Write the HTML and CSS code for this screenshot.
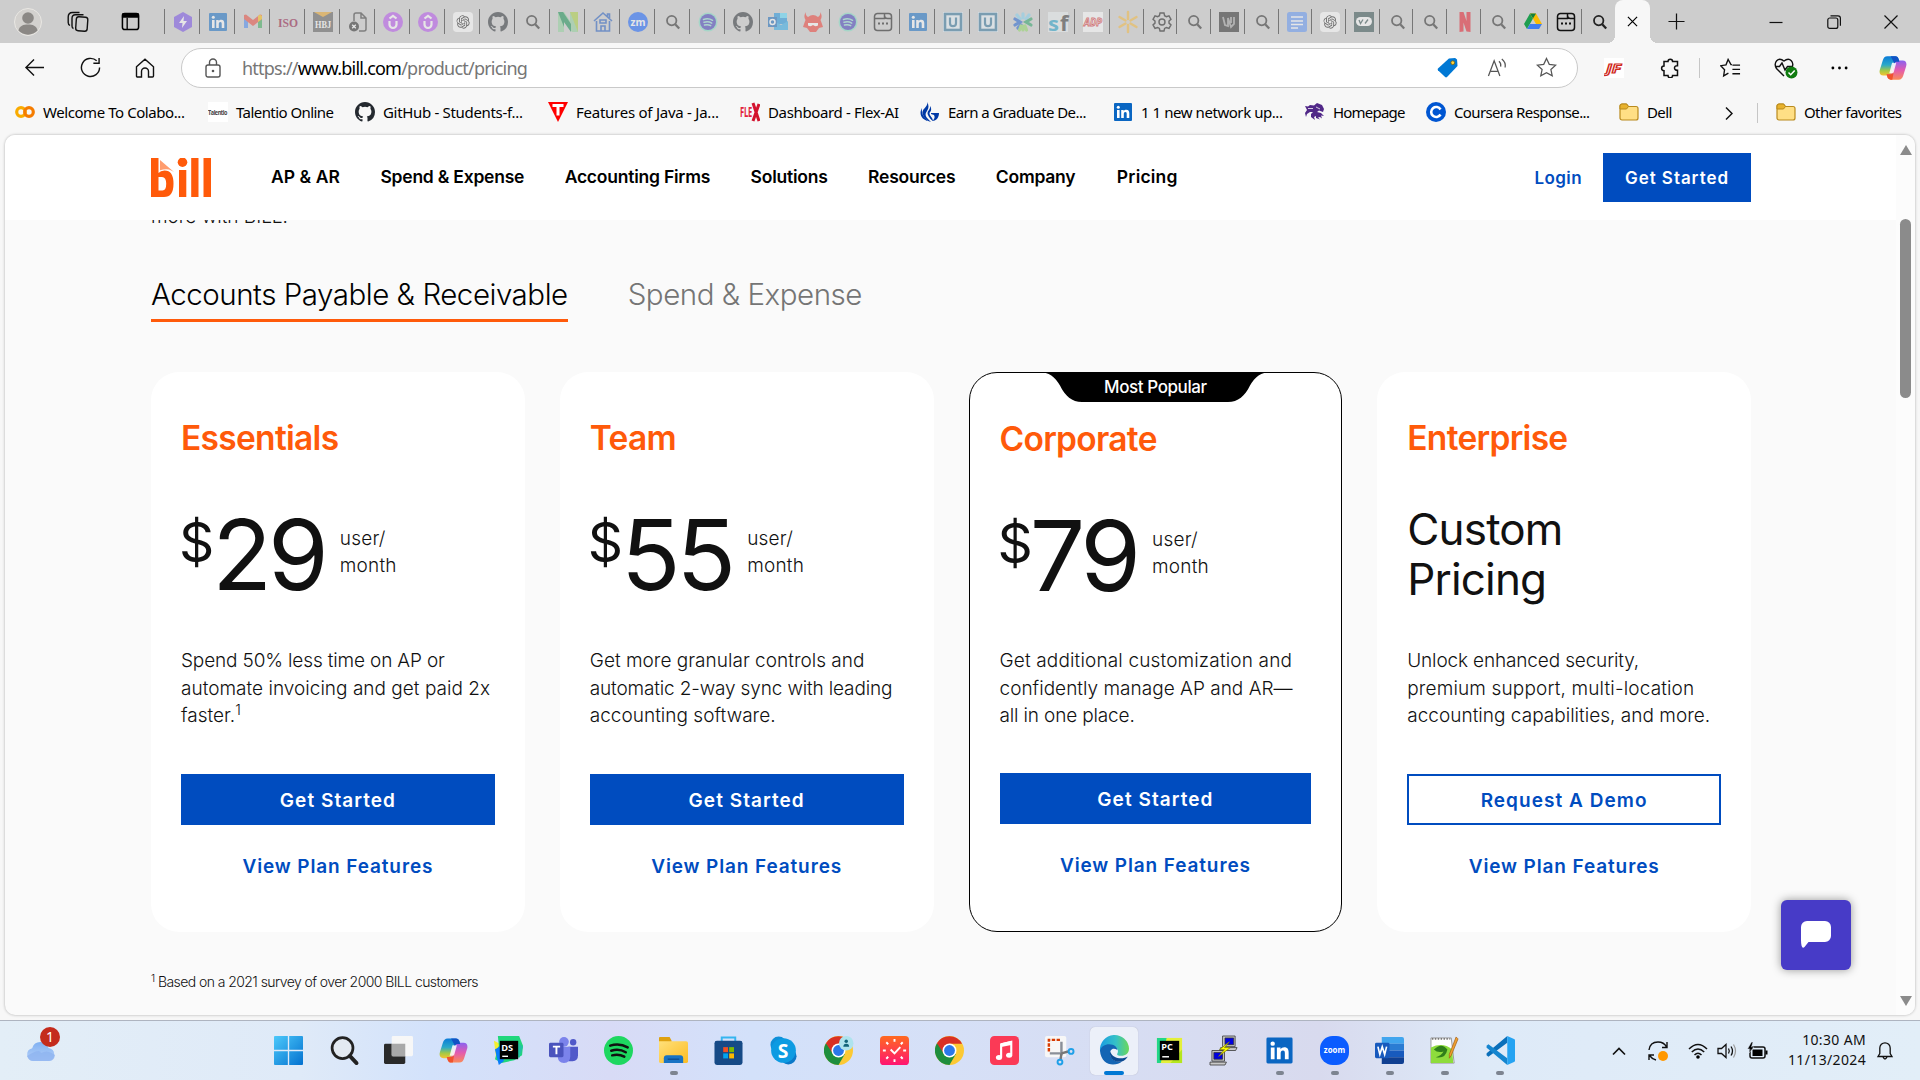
FILE: index.html
```html
<!DOCTYPE html>
<html lang="en">
<head>
<meta charset="utf-8">
<title>BILL Pricing</title>
<link rel="stylesheet" href="styles.css">
</head>
<body>
<svg class="sprite" width="0" height="0" aria-hidden="true">
  <defs>
    <linearGradient id="g-cop1" x1="0" y1="0" x2="0" y2="1"><stop offset="0" stop-color="#0a7bd8"/><stop offset=".45" stop-color="#2aa9c9"/><stop offset=".75" stop-color="#a5c944"/><stop offset="1" stop-color="#f6c330"/></linearGradient>
    <linearGradient id="g-cop2" x1="0" y1="0" x2="0" y2="1"><stop offset="0" stop-color="#8a63f0"/><stop offset=".5" stop-color="#e25bb0"/><stop offset="1" stop-color="#fb8b58"/></linearGradient>
    <linearGradient id="g-win" x1="0" y1="0" x2="1" y2="1"><stop offset="0" stop-color="#4cc9fb"/><stop offset="1" stop-color="#0371cf"/></linearGradient>
    <linearGradient id="g-edge" x1="0" y1="0" x2="1" y2="0"><stop offset="0" stop-color="#1b9de2"/><stop offset=".55" stop-color="#35c1c7"/><stop offset="1" stop-color="#6bd85a"/></linearGradient>
    <linearGradient id="g-red" x1="0" y1="0" x2="0" y2="1"><stop offset="0" stop-color="#ff6a1f"/><stop offset="1" stop-color="#ff1572"/></linearGradient>
    <linearGradient id="g-cloud" x1="0" y1="0" x2="0" y2="1"><stop offset="0" stop-color="#7fb0f2"/><stop offset="1" stop-color="#b9d2f8"/></linearGradient>
    <linearGradient id="g-dir" x1="0" y1="0" x2="1" y2="1"><stop offset="0" stop-color="#ffe07a"/><stop offset="1" stop-color="#fcbc23"/></linearGradient>
  </defs>
  <symbol id="search" viewBox="0 0 20 20"><circle cx="8.700" cy="8.600" r="4.700" fill="none" stroke="currentColor" stroke-width="1.800"/><path d="M12.200 12.200l4 4.300" stroke="currentColor" stroke-width="2.200"/></symbol>
  <symbol id="linkedin" viewBox="0 0 20 20"><rect x="1" y="1" width="18" height="18" rx="1" fill="#0a66c2"/><path d="M4 8h2.600v8H4zM8.200 8h2.500v1.200c.5-.9 1.500-1.400 2.600-1.400 2.300 0 3 1.500 3 3.700V16h-2.600v-4c0-1.200-.2-2-1.300-2s-1.600.8-1.600 2v4H8.200z" fill="#fff"/><circle cx="5.300" cy="5.300" r="1.500" fill="#fff"/></symbol>
  <symbol id="github" viewBox="0 0 16 16"><path fill="#24292f" d="M8 0C3.580 0 0 3.580 0 8c0 3.540 2.290 6.530 5.470 7.590.4.070.55-.17.55-.38 0-.19-.01-.82-.01-1.490-2.010.37-2.530-.49-2.690-.94-.09-.23-.48-.94-.82-1.130-.28-.15-.68-.52-.01-.53.63-.01 1.080.58 1.230.82.72 1.210 1.870.87 2.330.66.07-.52.28-.87.51-1.070-1.780-.2-3.640-.89-3.640-3.950 0-.87.31-1.590.82-2.150-.08-.2-.36-1.020.08-2.120 0 0 .67-.21 2.200.82a7.600 7.600 0 0 1 4 0c1.530-1.040 2.200-.82 2.200-.82.44 1.100.16 1.920.08 2.120.51.56.82 1.270.82 2.150 0 3.070-1.870 3.750-3.650 3.950.29.25.54.73.54 1.480 0 1.070-.01 1.930-.01 2.200 0 .21.15.46.55.38A8 8 0 0 0 16 8c0-4.420-3.580-8-8-8z"/></symbol>
  <symbol id="gpt" viewBox="0 0 24 24"><rect width="24" height="24" rx="4.500" fill="#fff"/><path transform="translate(4 4)" fill="#111" d="M14.950 6.550a3.980 3.980 0 0 0-.34-3.270 4.030 4.030 0 0 0-4.340-1.930A4.050 4.050 0 0 0 3.410 2.800 3.990 3.990 0 0 0 .75 4.730a4.030 4.030 0 0 0 .5 4.720 3.980 3.980 0 0 0 .34 3.270 4.030 4.030 0 0 0 4.340 1.930 3.990 3.990 0 0 0 3 1.340 4.030 4.030 0 0 0 3.840-2.800 3.990 3.990 0 0 0 2.660-1.930 4.030 4.030 0 0 0-.48-4.710zM8.940 14.950a2.980 2.980 0 0 1-1.920-.7l3.280-1.890a.53.53 0 0 0 .27-.46V7.280l1.350.78v3.900a3 3 0 0 1-2.980 2.990zM2.490 12.200a2.980 2.980 0 0 1-.36-2l3.280 1.890c.17.1.37.1.54 0l3.900-2.250v1.560l-3.280 1.900a3 3 0 0 1-4.080-1.100zM1.640 5.230A2.980 2.980 0 0 1 3.200 3.920v3.800c0 .19.100.36.270.46l3.880 2.240-1.350.78-3.230-1.860a3 3 0 0 1-1.130-4.110zm11.080 2.570L8.830 5.550l1.340-.78 3.230 1.860a3 3 0 0 1-.46 5.400V8.240a.54.54 0 0 0-.22-.44zm1.340-2.010l-3.270-1.910a.53.53 0 0 0-.54 0l-3.900 2.250V4.570l3.240-1.870a3 3 0 0 1 4.470 3.090zM5.640 8.540l-1.350-.78V3.890a3 3 0 0 1 4.900-2.290L5.910 3.490a.53.53 0 0 0-.27.460zm.73-1.570l1.740-1 1.740 1v2l-1.730 1-1.740-1z"/></symbol>
  <symbol id="spot" viewBox="0 0 20 20"><circle cx="10" cy="10" r="9.500" fill="#7fe0c4"/><circle cx="10" cy="10" r="8" fill="#3c35b8"/><path d="M5.500 7.500c3-1 6.500-.7 9 .8M6 10.300c2.600-.8 5.600-.5 7.700.8M6.500 13c2.200-.6 4.500-.4 6.200.7" fill="none" stroke="#8fe0d0" stroke-width="1.500" stroke-linecap="round"/></symbol>
  <symbol id="uarrow" viewBox="0 0 20 20"><circle cx="10" cy="10" r="10" fill="#b44cf0"/><path d="M6.500 9v3.500a3.500 3.500 0 0 0 7 0V9M6.500 6.500L10 3.800l3.500 2.700" fill="none" stroke="#fff" stroke-width="2.200"/></symbol>
  <symbol id="ubox" viewBox="0 0 20 20"><rect width="20" height="20" fill="#e8f3fa"/><rect x="2" y="2" width="16" height="16" fill="none" stroke="#2a6f96" stroke-width="2.600"/><path d="M7 5.500v5.700a3 3 0 0 0 6 0V5.500" fill="none" stroke="#2a6f96" stroke-width="2.200"/></symbol>
  <symbol id="tabpage" viewBox="0 0 20 20"><path d="M4.500 1.500h11a3 3 0 0 1 3 3v11a3 3 0 0 1-3 3h-11a3 3 0 0 1-3-3v-11a3 3 0 0 1 3-3zM1.500 6.500h10v-5M11.500 3.500q0 3 3 3h4" fill="none" stroke="#111" stroke-width="1.500"/><path d="M5 11.500h2M9 11.500h2M13 11.500h2" stroke="#111" stroke-width="2"/></symbol>
  <symbol id="folder" viewBox="0 0 20 18"><path d="M1 3a2 2 0 0 1 2-2h4.500l2 2.500H17a2 2 0 0 1 2 2V15a2 2 0 0 1-2 2H3a2 2 0 0 1-2-2z" fill="#ffdf85" stroke="#b98a1d" stroke-width="1.200"/><path d="M1 3a2 2 0 0 1 2-2h4.500l2 2.500L7.500 6H1z" fill="#e8b22d" stroke="#b98a1d" stroke-width="1"/></symbol>
  <symbol id="copilot" viewBox="0 0 30 30"><path d="M9 2.500h8.500c2 0 3 1.200 3.600 3l.8 2.800h-2.600c-1.800 0-2.700 1-3.200 2.700l-2.600 8.600c-.7 2.200-1.800 3.400-4 3.400H4.600C1 23-.1 20 1 16.500L4 7c.8-2.800 2.300-4.500 5-4.500z" fill="url(#g-cop1)"/><path d="M21 27.500h-8.500c-2 0-3-1.200-3.600-3l-.8-2.800h2.600c1.800 0 2.700-1 3.200-2.700l2.600-8.600c.7-2.200 1.800-3.400 4-3.400h4.900c3.600 0 4.700 3 3.600 6.500L26 23c-.8 2.800-2.300 4.500-5 4.500z" fill="url(#g-cop2)"/><path d="M14 9.500h4.500l-3 11H11z" fill="#fff" opacity=".85"/><path d="M12.500 2.500h5c2 0 3 1.200 3.600 3l.8 2.800h-2.600c-1.500 0-2.300.6-2.800 2z" fill="#1153c4"/><path d="M8.100 21.700h4.500c1.800 0 2.700-1 3.200-2.700l-1.500 8.500h-1.800c-2 0-3-1.200-3.600-3z" fill="#f0532d"/></symbol>
  <symbol id="chrome" viewBox="0 0 30 30"><circle cx="15" cy="15" r="15" fill="#fcc934"/><path d="M2 7.500A15 15 0 0 0 15 30L21.500 18.750 15 15z" fill="#1e8e3e"/><path d="M15 8h13a15 15 0 0 0-26-.5L9 18z" fill="#d93025"/><circle cx="15" cy="15" r="7.200" fill="#fff"/><circle cx="15" cy="15" r="5.600" fill="#2b78ea"/></symbol>
</svg>

<header class="tabstrip">
  <svg class="avatar" viewBox="0 0 28 28"><circle cx="14" cy="14" r="13.500" fill="#d3d1ce" stroke="#e9e7e3"/><circle cx="14" cy="10" r="5.800" fill="#8b8885"/><path d="M4.500 22.500c1-5 5-6 9.500-6s8.500 1 9.500 6A13 13 0 0 1 4.500 22.500z" fill="#8b8885"/></svg>
  <svg class="workspaces" viewBox="0 0 22 22" fill="none" stroke="#111" stroke-width="1.400"><rect x="9" y="6" width="11.500" height="14" rx="2.500" transform="rotate(4 15 13)"/><path d="M6.500 17.500C5 17 5 16 5 15V7.500C5 5 6 3.800 8.500 3.800h8M3 14.500c-1.500-.8-1.800-1.500-1.800-3V6C1.200 3 2.500 1.500 5.500 1.500h7"/></svg>
  <svg class="tabmenu" viewBox="0 0 20 20"><rect x="1.500" y="1.500" width="17" height="17" rx="2.500" fill="none" stroke="#000" stroke-width="1.600"/><path d="M1 2.500Q1 1 3 1h14q2 0 2 1.500V6H1z"/><path d="M6.500 6v12" stroke="#000" stroke-width="1.400"/></svg>
  <nav class="tabs">
    <span class="tab"><svg viewBox="0 0 20 20"><path d="M10 0l9 5v10l-9 5-9-5V5z" fill="#7147e8"/><path d="M11 4l-5 7h3.500L9 16l5-7h-3.500z" fill="#fff"/></svg></span>
    <span class="tab"><svg><use href="#linkedin"/></svg></span>
    <span class="tab"><svg viewBox="0 0 20 20"><path d="M1 4v12h4V8z" fill="#4285f4"/><path d="M19 4v12h-4V8z" fill="#34a853"/><path d="M1 3l2-.5L10 8l7-5.500 2 .5v4l-9 7-9-7z" fill="#ea4335"/><path d="M15 4l2-1.500L19 4v3l-4 3z" fill="#fbbc04"/></svg></span>
    <span class="tab"><svg viewBox="0 0 20 20"><text x="0" y="14.500" class="ico-serif" font-size="13" textLength="20" lengthAdjust="spacingAndGlyphs" fill="#8a0a3a">ISO</text></svg></span>
    <span class="tab"><svg viewBox="0 0 20 20"><rect width="20" height="20" fill="#555"/><path d="M1 0h18l-9 5z" fill="#e8a020"/><text x="2" y="15.500" class="ico-serif" font-size="11" textLength="16" lengthAdjust="spacingAndGlyphs" fill="#fff">HBJ</text></svg></span>
    <span class="tab"><svg viewBox="0 0 20 20"><path d="M6 9V3a2 2 0 0 1 2-2h5l5 5v11a2 2 0 0 1-2 2h-5M13 1v5h5" fill="none" stroke="#333" stroke-width="1.500"/><circle cx="6" cy="14.500" r="5" fill="#222"/><path d="M4.200 12.700l3.600 3.600M7.800 12.700l-3.600 3.600" stroke="#fff" stroke-width="1.300"/></svg></span>
    <span class="tab"><svg><use href="#uarrow"/></svg></span>
    <span class="tab"><svg><use href="#uarrow"/></svg></span>
    <span class="tab"><svg><use href="#gpt"/></svg></span>
    <span class="tab"><svg><use href="#github"/></svg></span>
    <span class="tab"><svg><use href="#search"/></svg></span>
    <span class="tab"><svg viewBox="0 0 20 20"><path d="M0 0h6l6 9V0h8v20h-6L6 10v10H0z" fill="#8fd19a"/><path d="M0 0h5l8 12v8L6 10v5z" fill="#0b8a4c"/><path d="M12 0h8v20z" fill="#a9cf3a"/></svg></span>
    <span class="tab"><svg viewBox="0 0 20 20" fill="none" stroke="#1a56c0" stroke-width="1.600"><path d="M1 9l9-8 9 8M3.500 9v10h13V9M14.500 4.500V2h2v4"/><path d="M8 19v-5h4v5M7 8h6v3H7z"/></svg></span>
    <span class="tab"><svg viewBox="0 0 20 20"><circle cx="10" cy="10" r="10" fill="#0b5cff"/><text x="2.500" y="13.500" class="ico-sans" font-size="10" textLength="15" lengthAdjust="spacingAndGlyphs" fill="#fff">zm</text></svg></span>
    <span class="tab"><svg><use href="#search"/></svg></span>
    <span class="tab"><svg><use href="#spot"/></svg></span>
    <span class="tab"><svg><use href="#github"/></svg></span>
    <span class="tab"><svg viewBox="0 0 20 20"><path d="M6 1h13v11H6z" fill="#1490df"/><path d="M6 9l7 4 7-4v9H6z" fill="#28a8ea"/><path d="M12 1h7v5h-7z" fill="#50d9ff"/><rect y="5" width="9" height="10" fill="#0f64b8"/><circle cx="4.500" cy="10" r="2.500" fill="none" stroke="#fff" stroke-width="1.500"/></svg></span>
    <span class="tab"><svg viewBox="0 0 20 20"><path d="M3 0q-1 3 2 5 5-4 10 0 3-2 2-5 3 4 .5 8l1.500 4 1 3-4 1-3 4H7l-3-4-4-1 1-3 1.500-4Q0 4 3 0z" fill="#f0382e"/><path d="M5 11h10v2.500q-3 1.500-5-.5-2 2-5 .5z" fill="#fff"/></svg></span>
    <span class="tab"><svg><use href="#spot"/></svg></span>
    <span class="tab"><svg><use href="#tabpage"/></svg></span>
    <span class="tab"><svg><use href="#linkedin"/></svg></span>
    <span class="tab"><svg><use href="#ubox"/></svg></span>
    <span class="tab"><svg><use href="#ubox"/></svg></span>
    <span class="tab"><svg viewBox="0 0 20 20" stroke-width="3.200" stroke-linecap="round"><path d="M10 1.800v4M4 3l3 4M16 3l-3 4" stroke="#7fd0f0"/><path d="M2 7l5 3-5 3M5 16l3-3" stroke="#1a5fd0" fill="none"/><path d="M10 18v-4M6.500 18l1.500-4M13.500 18L12 14" stroke="#8ed860"/><path d="M18 7l-5 3 5 3" stroke="#22a060" fill="none"/></svg></span>
    <span class="tab"><svg viewBox="0 0 20 20"><rect width="20" height="20" fill="#e8eef0"/><text x="0" y="19" class="ico-sans" font-size="20" textLength="11" lengthAdjust="spacingAndGlyphs" fill="#1a9fc8">s</text><text x="12" y="19" class="ico-sans" font-size="22" fill="#333">f</text></svg></span>
    <span class="tab"><svg viewBox="0 0 20 20"><rect width="20" height="20" fill="#fff"/><text x="1" y="14" class="ico-sans ico-it" font-size="11" textLength="18" lengthAdjust="spacingAndGlyphs" fill="#fff" stroke="#d8221f" stroke-width=".9">ADP</text></svg></span>
    <span class="tab narrow"><svg viewBox="0 0 20 20"><path d="M10 0v7M10 20v-7M1.500 5l6 3.500M18.500 5l-6 3.500M1.500 15l6-3.500M18.500 15l-6-3.500" stroke="#f5b93a" stroke-width="2.400" stroke-linecap="round"/></svg></span>
    <span class="tab narrow"><svg viewBox="0 0 20 20" fill="none" stroke="#111" stroke-width="1.400"><path d="M8 1h4l.6 2.700 1.800 1 2.600-.9 2 3.500-2 1.800v2l2 1.800-2 3.500-2.600-.9-1.800 1L12 19H8l-.6-2.500-1.800-1-2.600.9-2-3.500 2-1.800v-2L1 7.300l2-3.500 2.600.9 1.800-1z"/><circle cx="10" cy="10" r="3"/></svg></span>
    <span class="tab narrow"><svg><use href="#search"/></svg></span>
    <span class="tab narrow"><svg viewBox="0 0 20 20"><rect width="20" height="20" fill="#222"/><path d="M4 5l2 8 3 1V6l3 9 3-3V5M12 5v6" fill="none" stroke="#999" stroke-width="1.800"/></svg></span>
    <span class="tab narrow"><svg><use href="#search"/></svg></span>
    <span class="tab narrow"><svg viewBox="0 0 20 20"><rect width="20" height="20" rx="2.500" fill="#5a92f5"/><path d="M4 5h12M4 9h12M4 12.500h12M4 16h7" stroke="#fff" stroke-width="1.700"/></svg></span>
    <span class="tab narrow"><svg><use href="#gpt"/></svg></span>
    <span class="tab narrow"><svg viewBox="0 0 20 20"><rect width="20" height="20" fill="#2b4a4a"/><rect x="2" y="5" width="16" height="9" rx="4.500" fill="#fff"/><path d="M5 8l1.500 3.500L9 7.500M11 11.500l3-4" fill="none" stroke="#2b4a4a" stroke-width="1.300"/></svg></span>
    <span class="tab narrow"><svg><use href="#search"/></svg></span>
    <span class="tab narrow"><svg><use href="#search"/></svg></span>
    <span class="tab narrow"><svg viewBox="0 0 20 20"><path d="M4.500 0h4l3 9V0h4v20l-4-.5-3-9V19.500l-4 .5z" fill="#e50f20"/></svg></span>
    <span class="tab narrow"><svg><use href="#search"/></svg></span>
    <span class="tab narrow live"><svg viewBox="0 0 20 20"><path d="M7 1.500L1 12l3 5L10 6.500z" fill="#1e9e50"/><path d="M7 1.500h6L19 12h-6z" fill="#fbbc04"/><path d="M4 17l3-5h12l-3 5z" fill="#3f7df0"/><path d="M13 1.500L10 6.500 7 1.500z" fill="#12803c"/></svg></span>
    <span class="tab narrow live"><svg><use href="#tabpage"/></svg></span>
    <span class="tab narrow live"><svg><use href="#search"/></svg></span>
    <span class="tab active"><svg viewBox="0 0 12 12"><path d="M1 1l10 10M11 1L1 11" stroke="#000" stroke-width="1.300"/></svg></span>
  </nav>
  <svg class="newtab" viewBox="0 0 18 18"><path d="M9 .5v17M.5 9h17" stroke="#111" stroke-width="1.300"/></svg>
  <div class="winctl">
    <svg viewBox="0 0 14 14"><path d="M.5 7.500h13" stroke="#111" stroke-width="1.200"/></svg>
    <svg viewBox="0 0 14 14" fill="none" stroke="#111" stroke-width="1.200"><rect x=".8" y="3" width="10" height="10.400" rx="2"/><path d="M3.500.8H11q2.400 0 2.400 2.400v7.500"/></svg>
    <svg viewBox="0 0 14 14"><path d="M.5.5l13 13M13.500.5l-13 13" stroke="#111" stroke-width="1.200"/></svg>
  </div>
</header>

<div class="toolbar">
  <svg class="tb back" viewBox="0 0 22 20"><path d="M21 10H2M10.500 1.500L2 10l8.500 8.500" fill="none" stroke="#111" stroke-width="1.500"/></svg>
  <svg class="tb reload" viewBox="0 0 22 22"><path d="M20.500 11a9.500 9.500 0 1 1-3-7M20 1v5.500h-6" fill="none" stroke="#111" stroke-width="1.500"/></svg>
  <svg class="tb home" viewBox="0 0 20 20"><path d="M1.500 8.800L10 1.300l8.500 7.500V18a1 1 0 0 1-1 1h-4v-5.500a3.500 3.500 0 0 0-7 0V19h-4a1 1 0 0 1-1-1z" fill="none" stroke="#111" stroke-width="1.400"/></svg>
  <div class="omnibox">
    <svg class="lock" viewBox="0 0 16 20"><rect x="1" y="7" width="14" height="12" rx="2" fill="none" stroke="#555" stroke-width="1.400"/><path d="M4.500 7V4.500a3.500 3.500 0 0 1 7 0V7" fill="none" stroke="#555" stroke-width="1.400"/><circle cx="8" cy="13" r="1.300" fill="#555"/></svg>
    <span class="url">https://<b>www.bill.com</b>/product/pricing</span>
    <span class="omni-icons">
      <svg viewBox="0 0 22 22"><path d="M12.500 1.500L19 1l2 1.500.5 7-11 11.500q-1 .7-2 0L1 14q-.7-1.200 0-2z" fill="#0078d4"/><circle cx="16.500" cy="6" r="2" fill="#ffd23a" stroke="#6b5a10" stroke-width=".8"/></svg>
      <svg viewBox="0 0 22 22" fill="none" stroke="#555" stroke-width="1.300"><path d="M1.500 20L7.500 4l6 16M4 15h7"/><path d="M12.500 4.500q2.500 2 1.800 5.500M15.500 2q4.500 3.500 3.500 9"/></svg>
      <svg viewBox="0 0 22 22"><path d="M11 1.500l2.900 6.200 6.700.8-5 4.600 1.400 6.700-6-3.400-6 3.400 1.400-6.700-5-4.600 6.700-.8z" fill="none" stroke="#555" stroke-width="1.300"/></svg>
    </span>
  </div>
  <div class="ext">
    <svg viewBox="0 0 20 20"><rect width="20" height="20" fill="#fff"/><text x="2" y="14.500" class="ico-sans ico-it" font-size="12" textLength="15" lengthAdjust="spacingAndGlyphs" fill="#fff" stroke="#d02a1c" stroke-width="1.100">JF</text></svg>
    <svg class="puzzle" viewBox="0 0 20 20"><path d="M8 3.500a2.300 2.300 0 0 1 4.600 0h4.900v4.200c-4-.5-4 5 0 4.600V17.500h-4.900a2.300 2.300 0 0 1-4.600 0H4v-4.800a2.400 2.400 0 0 1 0-4.800V3.500z" fill="none" stroke="#111" stroke-width="1.500"/></svg>
    <i class="tb-sep"></i>
    <svg class="favs" viewBox="0 0 22 20"><path d="M12.500 6.500h-1L8.500 1 6.300 6.700.8 7.600l4 4.200-1 6.500 5-3" fill="none" stroke="#111" stroke-width="1.400"/><path d="M13 7h8M13 11.500h8M13 16h8" stroke="#111" stroke-width="1.400"/></svg>
    <svg class="health" viewBox="0 0 24 22"><path d="M10 19L2.500 11.500C-1 6 4-1 10 4c6-5 11 2 7.500 7.500M1.500 9.500h4L8 6l3 7 2.500-3.500h5" fill="none" stroke="#111" stroke-width="1.400"/><circle cx="17.500" cy="15.500" r="6" fill="#0f7b0f"/><path d="M14.500 15.500l2.200 2.200 4-4.200" fill="none" stroke="#fff" stroke-width="1.500"/></svg>
    <svg class="dots" viewBox="0 0 18 4"><circle cx="2" cy="2" r="1.500"/><circle cx="9" cy="2" r="1.500"/><circle cx="16" cy="2" r="1.500"/></svg>
    <svg class="cop"><use href="#copilot"/></svg>
  </div>
</div>

<nav class="bookmarks">
  <a class="bm b1"><svg viewBox="0 0 20 20"><circle cx="6" cy="10" r="4.300" fill="none" stroke="#f9ab00" stroke-width="3.200"/><circle cx="14" cy="10" r="4.300" fill="none" stroke="#f57c00" stroke-width="3.200"/></svg><span>Welcome To Colabo...</span></a>
  <a class="bm b2"><svg viewBox="0 0 20 20"><rect width="20" height="20" fill="#fff"/><text x="0" y="12.500" class="ico-sans" font-size="7" textLength="19" lengthAdjust="spacingAndGlyphs" fill="#444">Talentio</text></svg><span>Talentio Online</span></a>
  <a class="bm b3"><svg><use href="#github"/></svg><span>GitHub - Students-f...</span></a>
  <a class="bm b4"><svg viewBox="0 0 20 20"><path d="M0 0h20l-10 20z" fill="#f00"/><path d="M4.500 3.500h11M10 3.500v10" stroke="#fff" stroke-width="3"/></svg><span>Features of Java - Ja...</span></a>
  <a class="bm b5"><svg viewBox="0 0 20 20"><text x="0" y="15" class="ico-sans" font-size="14" textLength="12" lengthAdjust="spacingAndGlyphs" fill="#e2213c">FLE</text><path d="M13 1l6 18M19 2l-6 17" stroke="#d3122e" stroke-width="3"/></svg><span>Dashboard - Flex-AI</span></a>
  <a class="bm b6"><svg viewBox="0 0 20 20"><path d="M7 0c2 5-7 7-4 13 1 3 4 6 8 7-5-5-7-7-4-11 2-3 2-6 0-9z" fill="#0039a6"/><path d="M2 6c-4 7 1 12 6 13-3-3-7-6-6-13zM10 4c1 4-4 5-2 9 1 2 3 5 5 6 0-4-5-6-3-9 2-2 1-5 0-6z" fill="#0039a6"/><path d="M11 11h8c0 5-3 8-7 8 3-2 3-4 2-6l-3-1z" fill="#0039a6"/></svg><span>Earn a Graduate De...</span></a>
  <a class="bm b7"><svg><use href="#linkedin"/></svg><span>1 1 new network up...</span></a>
  <a class="bm b8"><svg viewBox="0 0 20 20"><path d="M0 4l3 .5L5 3l4 .5 3-2.500 5 2 2 4-1 3-4-1.500-2 1.500 4 1 3 3-3-.5 1 3-2-1.500-2 .5 2 2-4-1.500V14l-2 1 1 3-4-3v-3l2-2H5l-3 2-1 3-1-4 2-3z" fill="#512888"/><path d="M3 6.500h5M11 5l4 2" stroke="#f7f7f7" stroke-width=".8"/></svg><span>Homepage</span></a>
  <a class="bm b9"><svg viewBox="0 0 20 20"><circle cx="10" cy="10" r="10" fill="#0056d2"/><path d="M14.500 7.500a5 5 0 1 0 0 5" fill="none" stroke="#fff" stroke-width="2.600"/></svg><span>Coursera Response...</span></a>
  <a class="bm b10"><svg><use href="#folder"/></svg><span>Dell</span></a>
  <svg class="chev" viewBox="0 0 8 14"><path d="M1 1l6 6-6 6" fill="none" stroke="#111" stroke-width="1.500"/></svg>
  <i class="tb-sep"></i>
  <a class="bm b11"><svg><use href="#folder"/></svg><span>Other favorites</span></a>
</nav>

<main class="viewport">
  <div class="page">
    <header class="site-header">
      <svg class="logo" viewBox="0 0 60 39"><path fill="#ff5a0a" fill-rule="evenodd" d="M0 0h7.500v15q2-2.500 6-2.500 9 0 9 13.200T13 39H0zM7.500 19v13.500h4q3.700 0 3.700-6.700T11 19z"/><path d="M9 2l14 12q-2-1.500-5-2.500-4-1-9 .8z" fill="#ff9c6d"/><ellipse cx="31.500" cy="4.200" rx="4.800" ry="4.700" fill="#ff5a0a"/><path fill="#ff5a0a" d="M28 12h7.300v27H28zM40.200 0h7.300v39h-7.300zM52.500 0H60v39h-7.500z"/></svg>
      <nav class="site-nav">
        <a class="n1">AP &amp; AR</a><a>Spend &amp; Expense</a><a>Accounting Firms</a><a>Solutions</a><a>Resources</a><a>Company</a><a class="n7">Pricing</a>
      </nav>
      <a class="login">Login</a>
      <a class="cta">Get Started</a>
    </header>
    <p class="intro">more with BILL.</p>
    <nav class="product-tabs"><a class="on">Accounts Payable &amp; Receivable</a><a>Spend &amp; Expense</a></nav>
    <section class="plans">
      <article class="plan">
        <h2>Essentials</h2>
        <div class="price"><span class="cur">$</span><span class="amt">29</span><span class="per">user/<br>month</span></div>
        <p class="desc"><span class="tight">Spend 50% less time on AP or</span><br>automate invoicing and get paid 2x<br>faster.<sup>1</sup></p>
        <a class="btn">Get Started</a>
        <a class="more">View Plan Features</a>
      </article>
      <article class="plan">
        <h2>Team</h2>
        <div class="price"><span class="cur">$</span><span class="amt">55</span><span class="per">user/<br>month</span></div>
        <p class="desc">Get more granular controls and<br><span class="tight">automatic 2-way sync with leading</span><br>accounting software.</p>
        <a class="btn">Get Started</a>
        <a class="more">View Plan Features</a>
      </article>
      <article class="plan featured">
        <div class="ribbon"><svg viewBox="0 0 232 29" preserveAspectRatio="none"><path d="M0 0h232c-10 0-16 5-21 13-5 10-12 16-22 16H43c-10 0-17-6-22-16C16 5 10 0 0 0z"/></svg><span>Most Popular</span></div>
        <h2>Corporate</h2>
        <div class="price"><span class="cur">$</span><span class="amt">79</span><span class="per">user/<br>month</span></div>
        <p class="desc"><span class="loose">Get additional customization and</span><br>confidently manage AP and AR—<br><span class="tight">all in one place.</span></p>
        <a class="btn">Get Started</a>
        <a class="more">View Plan Features</a>
      </article>
      <article class="plan">
        <h2>Enterprise</h2>
        <div class="price custom">Custom<br>Pricing</div>
        <p class="desc"><span class="tight">Unlock enhanced security,</span><br><span class="loose">premium support, multi-location</span><br>accounting capabilities, and more.</p>
        <a class="btn outline">Request A Demo</a>
        <a class="more">View Plan Features</a>
      </article>
    </section>
    <p class="footnote"><sup>1</sup> Based on a 2021 survey of over 2000 BILL customers</p>
  </div>
  <div class="scrollbar"><i class="up"></i><i class="thumb"></i><i class="down"></i></div>
  <button class="chat"><svg viewBox="0 0 30 28"><path d="M6 0h18a6 6 0 0 1 6 6v9a6 6 0 0 1-6 6H7.500L3.500 26q-2 2-3-1.500Q0 22 0 19V6a6 6 0 0 1 6-6z" fill="#fff"/></svg></button>
</main>

<footer class="taskbar">
  <div class="weather"><svg viewBox="0 0 30 22"><path d="M7 21a6.500 6.500 0 0 1-.8-12.800A8.500 8.500 0 0 1 22.500 8 6.600 6.600 0 0 1 23 21z" fill="url(#g-cloud)"/><path d="M1 16q13-8 14-3 7-4 14 2-1 6-6 6H7q-4 0-6-5z" fill="#8fb4f0" opacity=".8"/></svg><b>1</b></div>
  <div class="apps">
    <span class="app"><svg viewBox="0 0 30 30"><path d="M0 1q0-1 1-1h13.300v14.300H0zM15.700 0H29q1 0 1 1v13.300H15.700zM0 15.700h14.300V30H1q-1 0-1-1zM15.700 15.700H30V29q0 1-1 1H15.700z" fill="url(#g-win)"/></svg></span>
    <span class="app"><svg viewBox="0 0 30 30"><circle cx="14" cy="12.500" r="10.800" fill="#e3eaf2" stroke="#222" stroke-width="2.800"/><path d="M21.500 20.500l7 7.500" stroke="#222" stroke-width="4" stroke-linecap="round"/></svg></span>
    <span class="app"><svg viewBox="0 0 30 30"><rect y="8" width="22" height="21" rx="1.500" fill="#2a2a2a"/><rect x="8" y="0" width="22" height="21" rx="1.500" fill="#f7f7f7"/><path d="M8 8h14v13H8z" fill="#a9a9a9"/></svg></span>
    <span class="app"><svg><use href="#copilot"/></svg></span>
    <span class="app"><svg viewBox="0 0 30 30"><path d="M0 5l6 3 0 8-4 6z" fill="#f5f02f"/><path d="M4 0l22 0 4 10-1 10-8 5L8 28 1 24l4-14z" fill="#20d77c"/><path d="M1 14l9-6v18l-5 4z" fill="#087cfa"/><path d="M20 3l10 8-4 12z" fill="#22c3a0"/><rect x="6" y="5" width="19" height="19" fill="#000"/><text x="7.500" y="15" class="ico-sans" font-size="9.500" fill="#fff">DS</text><path d="M8.500 21h6" stroke="#fff" stroke-width="1.400"/></svg></span>
    <span class="app"><svg viewBox="0 0 30 30"><circle cx="15.500" cy="6" r="5" fill="#7b83eb"/><circle cx="25" cy="6.500" r="3.300" fill="#5059c9"/><path d="M20 11h10v9q0 6-5.500 6H20z" fill="#5059c9"/><path d="M9 11h13v10q0 7-6.500 7T9 21z" fill="#7b83eb"/><rect y="7" width="15" height="15" rx="1.500" fill="#4a53bd"/><path d="M4 11h7.500M7.700 11v8" stroke="#fff" stroke-width="2"/></svg></span>
    <span class="app"><svg viewBox="0 0 30 30"><circle cx="15" cy="15" r="15" fill="#1ed760"/><path d="M6.500 10c6-1.800 13-1 18 1.800M7.500 15.200c5-1.500 11-.8 15 1.600M8.500 20c4.200-1.200 9-.6 12.500 1.400" fill="none" stroke="#111" stroke-width="2.600" stroke-linecap="round"/></svg></span>
    <span class="app run"><svg viewBox="0 0 30 30"><path d="M0 2q0-1 1-1h10l2 4v5H0z" fill="#dfa10f"/><path d="M0 5.500h28q2 0 2 2V26q0 2-2 2H2q-2 0-2-2z" fill="url(#g-dir)"/><path d="M5 28v-5q0-3 3-3h14q3 0 3 3v5z" fill="#1873c4"/><path d="M9 24h12" stroke="#0d4f94" stroke-width="1.500"/></svg></span>
    <span class="app"><svg viewBox="0 0 30 30"><path d="M8 6V1.500h14V6" fill="none" stroke="#35b5f0" stroke-width="2"/><rect x=".5" y="5" width="29" height="25" rx="2.500" fill="#164a86"/><path d="M9.500 11.500h5v5.200h-5z" fill="#f25022"/><path d="M15.700 11.500h5v5.200h-5z" fill="#7fba00"/><path d="M9.500 18h5v5.200h-5z" fill="#00a4ef"/><path d="M15.700 18h5v5.200h-5z" fill="#ffb900"/></svg></span>
    <span class="app"><svg viewBox="0 0 30 30"><circle cx="10" cy="9" r="8.500" fill="#0f8fd8"/><circle cx="20" cy="21" r="8.500" fill="#0b78c8"/><circle cx="15" cy="15" r="12.800" fill="#0d9be2"/><text x="9" y="22.500" class="ico-sans" font-size="20" fill="#fff">S</text></svg></span>
    <span class="app"><svg viewBox="0 0 30 30"><use href="#chrome"/><circle cx="23" cy="7.500" r="7.500" fill="#aee3ee"/><circle cx="23" cy="5.500" r="1.800" fill="#11647a"/><path d="M20 11q0-3 3-3t3 3z" fill="#11647a"/></svg></span>
    <span class="app"><svg viewBox="0 0 30 30"><rect width="30" height="30" rx="4" fill="url(#g-red)"/><path d="M15 3v3M15 24v3M3 15h3M24 15h3M6.500 6.500l2 2M21.500 21.500l2 2M23.500 6.500l-2 2M6.500 23.500l2-2" stroke="#fff" stroke-width="2"/><path d="M11 14l4 4 6-6.500" fill="none" stroke="#fff" stroke-width="2"/></svg></span>
    <span class="app"><svg><use href="#chrome"/></svg></span>
    <span class="app"><svg viewBox="0 0 30 30"><rect width="30" height="30" rx="4.500" fill="#fb3a56"/><path d="M11.500 22V8.500L22 6v13.500" fill="none" stroke="#fff" stroke-width="2.200"/><path d="M11.500 7.500L22 5.200v4L11.500 11.500z" fill="#fff"/><ellipse cx="9.300" cy="22.300" rx="3.200" ry="2.600" fill="#fff"/><ellipse cx="19.800" cy="20" rx="3.200" ry="2.600" fill="#fff"/></svg></span>
    <span class="app"><svg viewBox="0 0 30 30"><rect width="22" height="22" rx="2" fill="#f7f7f7"/><path d="M4 16V4h12" fill="none" stroke="#d83b01" stroke-width="2.500" stroke-dasharray="3.500 1.500"/><path d="M17 6v14M5 18h12" stroke="#8a8f98" stroke-width="2.500"/><path d="M17 18l7-2M17 18l-1 7" stroke="#777" stroke-width="2.500"/><circle cx="27" cy="16" r="2.500" fill="none" stroke="#1fa0e8" stroke-width="2"/><circle cx="15.500" cy="27" r="2.500" fill="none" stroke="#1fa0e8" stroke-width="2"/></svg></span>
    <span class="app current"><svg viewBox="0 0 30 30"><path d="M0 15A15 15 0 0 1 30 13c0 5-3.500 7.500-8 7.500-3 0-5-1-4-2.500 2-3-1-8-6.500-8C5 10 0 14 0 18z" fill="url(#g-edge)"/><path d="M0 15c1-4 5-6.500 9.500-6.500 5 0 8.500 3 8.500 6-5-3-8 0-7.500 4.500.6 5 6 9 12.500 7C16 32 1 31 0 15z" fill="#1465b4"/><path d="M10.500 16c-1.500 6 4 12 12 10.500 3-1 5-3 6.300-5.300-4 2.500-15 3.800-18.300-5.200z" fill="#0c4a92"/></svg></span>
    <span class="app"><svg viewBox="0 0 30 30"><path d="M2 2h26v26H2z" fill="#e4f03a"/><path d="M2 2h10l-6 26H2z" fill="#21d789"/><path d="M16 28l12-14v14z" fill="#b5e61d"/><rect x="5" y="5" width="20" height="20" fill="#000"/><text x="6.500" y="14.500" class="ico-sans" font-size="9.500" fill="#fff">PC</text><path d="M7.500 21.500h7" stroke="#fff" stroke-width="1.500"/></svg></span>
    <span class="app"><svg viewBox="0 0 30 30" stroke="#333" stroke-width=".8"><path d="M13 0h13v11H13zM11 12h17l-1.500 3H10z" fill="#c9c9c9"/><path d="M2 15h13v11H2zM0 27h17l-1.500 3H0z" fill="#c9c9c9"/><path d="M15.500 2h9v7h-9zM4 17h9v7H4z" fill="#0000e0"/><path d="M20 6l-10 8h5l-6 7 12-9h-6z" fill="#ff0" stroke="#880"/></svg></span>
    <span class="app run"><svg><use href="#linkedin"/></svg></span>
    <span class="app run"><svg viewBox="0 0 30 30"><rect width="30" height="30" rx="13" fill="#0b5cff"/><text x="4" y="18" class="ico-sans" font-size="9" textLength="22" lengthAdjust="spacingAndGlyphs" fill="#fff">zoom</text></svg></span>
    <span class="app run"><svg viewBox="0 0 30 30"><path d="M7 1h21q2 0 2 2v5H7z" fill="#41a5ee"/><path d="M7 8h23v7H7z" fill="#2b7cd3"/><path d="M7 15h23v7H7z" fill="#185abd"/><path d="M7 22h23v5q0 2-2 2H7z" fill="#103f91"/><rect y="7" width="15" height="16" rx="1.500" fill="#185abd"/><path d="M3 11l2 8 2.500-8L10 19l2-8" fill="none" stroke="#fff" stroke-width="1.700"/></svg></span>
    <span class="app run"><svg viewBox="0 0 30 30"><path d="M1 2h21l3 26H1z" fill="#fff" stroke="#999"/><path d="M1 12q12-6 22 2l1 14H1z" fill="#8edc3c"/><path d="M4 14q8-8 14 0-2 10-12 8 6-2 8-6-6 2-10-2z" fill="#2f7f1a"/><path d="M2 3h19" stroke="#777" stroke-width="2" stroke-dasharray="1.500 1.500"/><path d="M27 1l2 2-7 17-2 3v-4z" fill="#f0a030" stroke="#a05a10" stroke-width=".7"/></svg></span>
    <span class="app run"><svg viewBox="0 0 30 30"><path d="M0 19.500l2.500 2L22 7V0L1 17.500q-1.200 1 0 2z" fill="#0a6fba"/><path d="M0 10.500l2.500-2L22 23v7L1 12.500q-1.200-1 0-2z" fill="#1585cf"/><path d="M22 0l7 3q1 .5 1 1.500v21q0 1-1 1.500l-7 3z" fill="#25a3f2"/></svg></span>
  </div>
  <div class="tray">
    <svg class="t-up" viewBox="0 0 14 8"><path d="M1 7.500L7 1.500l6 6" fill="none" stroke="#111" stroke-width="1.700"/></svg>
    <svg class="t-sync" viewBox="0 0 20 20"><path d="M1 9Q2 1 10 1q6 0 8.500 5M19 1v5.500h-5M1 19v-5h5M1.500 14.500Q4 18 8 19" fill="none" stroke="#111" stroke-width="1.400"/><circle cx="15" cy="15" r="5" fill="#ff9800"/></svg>
    <svg class="t-wifi" viewBox="0 0 20 16"><path d="M1 6q9-9 18 0M3.800 9q6.200-6 12.400 0M6.500 12q3.500-3.500 7 0" fill="none" stroke="#111" stroke-width="1.500"/><circle cx="10" cy="14" r="1.800"/></svg>
    <svg class="t-vol" viewBox="0 0 20 16"><path d="M1 5.500h3.500L9 1.500v13l-4.500-4H1z" fill="none" stroke="#111" stroke-width="1.300"/><path d="M11.500 5.500q1.600 2.500 0 5M14 3.500q3 4.500 0 9" fill="none" stroke="#111" stroke-width="1.300"/><path d="M16.500 1.500q4 6.500 0 13" fill="none" stroke="#999" stroke-width="1.200"/></svg>
    <svg class="t-bat" viewBox="0 0 20 16"><rect x="2" y="4" width="15" height="11" rx="2" fill="none" stroke="#111" stroke-width="1.500"/><path d="M4.500 6.500h10v6.500h-10zM17.500 7.500h2v4h-2z"/><path d="M3.500-1L-.5 6h2.500L1 10l5-6H3.500L5-1z" stroke="#e2edf8" stroke-width=".5"/></svg>
    <div class="clock">10:30 AM<br>11/13/2024</div>
    <svg class="t-bell" viewBox="0 0 16 20"><path d="M1 15.500l1.800-3V7a5.200 5.200 0 0 1 10.400 0v5.500l1.800 3zM6 16q2 4 4 0" fill="none" stroke="#111" stroke-width="1.300"/></svg>
  </div>
</footer>
</body>
</html>
```
FILE: styles.css
```css
* { box-sizing: border-box; }
body { margin: 0; width: 1920px; height: 1080px; overflow: hidden; display: flex; flex-direction: column; background: #f7f7f7; color: #111; font-family: "Noto Sans", "Open Sans", sans-serif; }
svg { display: block; flex: none; }
p, h2 { margin: 0; }
.sprite { position: absolute; }
.ico-sans { font-family: "Open Sans", "Liberation Sans", sans-serif; font-weight: 700; }
.ico-serif { font-family: "Liberation Serif", serif; font-weight: 700; }
.ico-it { font-style: italic; }

/* Browser tab strip */
.tabstrip { height: 43px; background: #cdcdcd; display: flex; align-items: center; flex: none; }
.avatar { width: 28px; height: 28px; margin-left: 14px; }
.workspaces { width: 22px; height: 22px; margin-left: 25px; }
.tabmenu { width: 19px; height: 19px; margin: 0 24px 0 32px; }
.tabs { display: flex; align-items: center; height: 43px; }
.tab { width: 35px; height: 25px; border-left: 1px solid #777; padding-left: 8px; display: flex; align-items: center; color: #222; flex: none; }
.tab.narrow { width: 33.73px; }
.tab svg { width: 20px; height: 20px; opacity: .5; overflow: visible; }
.tab.live svg { opacity: 1; }
.tab.active { width: 35px; height: 43px; background: #f7f7f7; border: 0; border-radius: 8px 8px 0 0; padding: 0; justify-content: center; position: relative; }
.tab.active::before, .tab.active::after { content: ""; position: absolute; bottom: 0; width: 8px; height: 8px; }
.tab.active::before { left: -8px; background: radial-gradient(circle at 0 0, transparent 8px, #f7f7f7 8px); }
.tab.active::after { right: -8px; background: radial-gradient(circle at 100% 0, transparent 8px, #f7f7f7 8px); }
.tab.active svg { width: 11px; height: 11px; opacity: 1; }
.newtab { width: 17px; height: 17px; margin-left: 18px; }
.winctl { margin-left: auto; margin-right: 22px; display: flex; gap: 43.5px; }
.winctl svg { width: 14px; height: 14px; }

/* Navigation toolbar */
.toolbar { height: 49px; flex: none; display: flex; align-items: center; padding-left: 24px; }
.tb.back { width: 21px; height: 19px; }
.tb.reload { width: 21px; height: 21px; margin-left: 35px; }
.tb.home { width: 20px; height: 20px; margin-left: 34px; }
.omnibox { margin-left: 26px; width: 1397px; height: 40px; border: 1px solid #c9c9c9; border-radius: 20px; background: #fff; display: flex; align-items: center; padding-left: 23px; }
.lock { width: 16px; height: 20px; }
.url { margin-left: 21px; font-size: 18px; letter-spacing: -.78px; line-height: 24px; color: #767676; white-space: nowrap; }
.url b { font-weight: 400; color: #000; }
.omni-icons { margin-left: auto; margin-right: 20px; display: flex; gap: 28.5px; }
.omni-icons svg { width: 21px; height: 21px; }
.ext { display: flex; align-items: center; }
.ext svg { width: 20px; height: 20px; margin-left: 26px; }
.ext .puzzle { margin-left: 36px; }
.tb-sep { width: 1px; height: 20px; background: #c6c6c6; }
.ext .tb-sep { margin-left: 19px; }
.ext .favs { width: 21px; margin-left: 20px; }
.ext .health { width: 24px; height: 22px; margin-left: 33px; }
.ext .dots { width: 17px; height: 4px; margin-left: 33px; }
.ext .cop { width: 28px; height: 28px; margin-left: 31px; }

/* Bookmarks bar */
.bookmarks { height: 42px; flex: none; display: flex; align-items: center; padding-left: 15px; font-size: 15px; color: #000; white-space: nowrap; }
.bm { display: flex; align-items: center; gap: 8px; line-height: 20px; flex: none; position: relative; top: -1px; }
.bm svg { width: 20px; height: 20px; }
.b1 { width: 193px; letter-spacing: -.43px; }
.b2 { width: 147px; letter-spacing: -.56px; }
.b3 { width: 193px; letter-spacing: -.32px; }
.b4 { width: 192px; letter-spacing: -.25px; }
.b5 { width: 180px; letter-spacing: -.36px; }
.b6 { width: 193px; letter-spacing: -.57px; }
.b7 { width: 192px; letter-spacing: -.44px; }
.b8 { width: 121px; letter-spacing: -.8px; }
.b9 { width: 193px; letter-spacing: -.64px; }
.b10 { width: 52px; letter-spacing: -.6px; }
.b11 { letter-spacing: -.6px; }
.bookmarks .chev { width: 8px; height: 15px; margin-left: 54px; }
.bookmarks .tb-sep { margin-left: 24px; margin-right: 18px; }

/* Page viewport */
.viewport { position: relative; flex: none; margin: 1px 5px 0; height: 880px; display: flex; border-radius: 10px; overflow: hidden; background: #fafafa; box-shadow: 0 0 3px rgba(0,0,0,.3); font-family: Inter, "Liberation Sans", sans-serif; }
.page { flex: 1; min-width: 0; overflow: hidden; }
.scrollbar { width: 19px; background: #fcfcfc; display: flex; flex-direction: column; align-items: center; }
.scrollbar .up, .scrollbar .down { border: 6px solid transparent; width: 12px; }
.scrollbar .up { margin-top: 10px; border-top: 0; border-bottom: 10px solid #8b8b8b; }
.scrollbar .thumb { margin-top: 64px; width: 11px; height: 179px; border-radius: 6px; background: #8b8b8b; }
.scrollbar .down { margin-top: auto; margin-bottom: 9px; border-bottom: 0; border-top: 10px solid #8b8b8b; }

/* Site header */
.site-header { position: relative; z-index: 1; height: 85px; background: #fff; display: flex; align-items: center; padding: 0 145px 0 146px; }
.logo { width: 60px; height: 39px; }
.site-nav { display: flex; margin: -2px 0 0 60px; gap: 40.5px; font-size: 17.5px; font-weight: 600; letter-spacing: -.23px; color: #000; white-space: nowrap; line-height: 24px; }
.site-nav .n1 { letter-spacing: .05px; }
.site-nav .n7 { letter-spacing: .2px; margin-left: 1px; }
.login { margin-left: auto; font-size: 17px; font-weight: 600; letter-spacing: .4px; color: #004cbf; }
.cta { margin-left: 21px; width: 148px; height: 49px; background: #004cbf; color: #fff; font-size: 17px; font-weight: 600; letter-spacing: .95px; display: flex; align-items: center; justify-content: center; }

/* Pricing */
.intro { margin: -17px 0 0 146px; font-size: 19px; font-weight: 300; line-height: 28px; }
.product-tabs { margin: 45px 0 0 146px; display: flex; gap: 60px; font-size: 29.5px; font-weight: 300; line-height: 36px; letter-spacing: -.47px; color: #757575; white-space: nowrap; }
.product-tabs a { padding-bottom: 7px; }
.product-tabs .on { color: #000; border-bottom: 3px solid #ff5a0a; }
.plans { margin: 50px 145px 0 146px; height: 560px; display: grid; grid-template-columns: repeat(4, 1fr); gap: 35px; }
.plan { background: #fff; border-radius: 28px; padding: 46px 30px 0; display: flex; flex-direction: column; position: relative; white-space: nowrap; }
.plan h2 { font-size: 33.5px; line-height: 40px; font-weight: 600; letter-spacing: -.7px; color: #ff5a0a; }
.price { height: 100px; margin-top: 46px; display: flex; }
.cur { font-size: 55px; line-height: 77px; margin-left: -2px; }
.amt { font-size: 98px; line-height: 101px; letter-spacing: -4px; margin-left: -2px; }
.per { font-size: 19px; line-height: 27px; font-weight: 300; letter-spacing: .2px; margin: 20.5px 0 0 15px; }
.price.custom { display: block; font-size: 44px; line-height: 50px; letter-spacing: -.83px; }
.desc { margin: 43px 0 44px; height: 83px; font-size: 19px; line-height: 27.5px; font-weight: 300; letter-spacing: .02px; }
.tight { letter-spacing: -.15px; }
.loose { letter-spacing: .15px; }
sup { font-size: .75em; line-height: 0; vertical-align: .5em; }
.btn { height: 51px; padding-top: 1px; background: #004cbf; color: #fff; font-size: 19px; font-weight: 600; letter-spacing: 1.05px; display: flex; align-items: center; justify-content: center; }
.btn.outline { background: #fff; color: #004cbf; border: 2px solid #004cbf; }
.more { margin-top: 30px; text-align: center; font-size: 19px; line-height: 24px; font-weight: 600; letter-spacing: .88px; color: #004cbf; }
.featured { border: 1px solid #000; }
.featured .desc { margin: 42px 0 43px; }
.featured .amt { margin-left: -3px; }
.ribbon { position: absolute; top: -1px; left: 50%; width: 232px; height: 30px; margin-left: -116px; text-align: center; color: #fff; font-size: 17px; line-height: 30px; font-weight: 500; letter-spacing: -.42px; }
.ribbon svg { position: absolute; inset: 0; width: 232px; height: 30px; }
.ribbon span { position: relative; }
.footnote { margin: 40px 0 0 146px; font-size: 14px; line-height: 20px; font-weight: 300; letter-spacing: -.57px; }
.chat { position: absolute; left: 1776px; top: 765px; width: 70px; height: 70px; border: 0; padding: 0; border-radius: 6px; background: #473bc7; box-shadow: 0 0 10px rgba(0,0,0,.4); display: flex; align-items: center; justify-content: center; }
.chat svg { width: 30px; height: 28px; }

/* Taskbar */
.taskbar { margin-top: 5px; height: 60px; flex: none; border-top: 1px solid #aeb4c0; display: flex; align-items: center; background: linear-gradient(90deg, #e3eef7 0, #dfeaf8 300px, #d3e2fb 430px, #d8dbf6 610px, #d3e1fa 750px, #d6e0f7 950px, #d8daee 1320px, #deeaf8 1480px, #e2eef8 1920px); }
.weather { position: relative; width: 30px; margin-left: 26px; }
.weather b { position: absolute; left: 14px; top: -13px; width: 20px; height: 20px; border-radius: 50%; background: #c42b1c; color: #fff; font-size: 14px; line-height: 20px; text-align: center; font-weight: 400; }
.apps { display: flex; margin-left: 208px; gap: 7.1px; }
.app { position: relative; width: 48px; height: 48px; display: flex; align-items: center; justify-content: center; border-radius: 5px; }
.app svg { width: 29px; height: 29px; overflow: visible; }
.app.run::after { content: ""; position: absolute; bottom: 0; left: 20px; width: 8px; height: 4px; border-radius: 2px; background: #7d8490; }
.app.current { background: #ecf0f9; box-shadow: 0 0 1px #aab; }
.app.current::after { content: ""; position: absolute; bottom: 0; left: 14px; width: 20px; height: 4px; border-radius: 2px; background: #0078d4; }
.tray { margin-left: auto; margin-right: 27px; display: flex; align-items: center; color: #111; }
.tray svg { overflow: visible; }
.t-up { width: 14px; height: 8px; }
.t-sync { width: 20px; height: 20px; margin-left: 22px; }
.t-wifi { width: 20px; height: 16px; margin-left: 20px; }
.t-vol { width: 20px; height: 16px; margin-left: 9px; }
.t-bat { width: 20px; height: 16px; margin-left: 11px; }
.clock { position: relative; top: -1px; margin-left: 20px; font-size: 14px; letter-spacing: .35px; line-height: 20px; text-align: right; white-space: nowrap; }
.t-bell { width: 16px; height: 20px; margin-left: 11px; }
```
